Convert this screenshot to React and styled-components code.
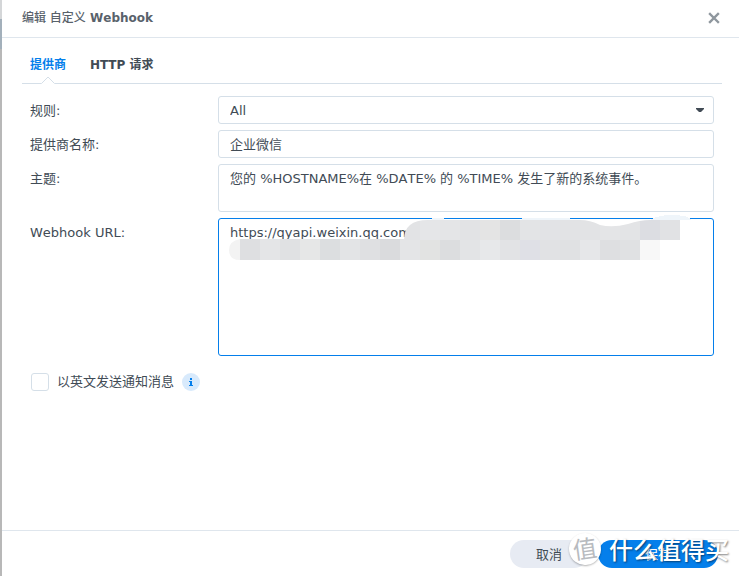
import React, { useState } from 'react';
import styled, { createGlobalStyle } from 'styled-components';

const GlobalStyle = createGlobalStyle`
  * {
    box-sizing: border-box;
  }

  body {
    margin: 0;
    background: #ffffff;
  }

  body, button, input, select, textarea {
    font-family: "DejaVu Sans", "Noto Sans CJK SC", sans-serif;
    font-size: 13px;
    font-kerning: none;
    color: #414b55;
  }
`;

const Desktop = styled.div`
  min-height: 100vh;
  display: flex;
  padding-left: 2px;
  background: linear-gradient(#d4d6d8 0 19px, #a3b0bb 19px 49px, #b8b8b8 49px);
`;

const Dialog = styled.section`
  flex: 1;
  min-width: 0;
  display: flex;
  flex-direction: column;
  background: #ffffff;
`;

const Header = styled.header`
  height: 38px;
  display: flex;
  align-items: center;
  justify-content: space-between;
  padding: 0 19px 2px 20px;
  border-bottom: 1px solid #dfe6ed;
`;

const Title = styled.h1`
  margin: 0;
  font-size: 12px;
  line-height: 16px;
  font-weight: bold;
  color: #59626b;
`;

const TitleName = styled.span`
  font-weight: 500;
`;

const CloseButton = styled.button`
  display: flex;
  padding: 0;
  border: 0;
  background: none;
`;

const Tabs = styled.nav`
  display: flex;
  gap: 24px;
  height: 46px;
  margin: 0 17px 0 20px;
  padding: 0 8px;
  border-bottom: 1px solid #d5dfe8;
`;

const Tab = styled.button`
  position: relative;
  padding: 6px 0 0;
  border: 0;
  background: none;
  font-size: 12px;
  font-weight: bold;
  color: ${(props) => (props.$active ? '#057feb' : '#414b55')};
`;

const TabArrow = styled.svg`
  position: absolute;
  left: 50%;
  bottom: -1px;
  margin-left: -7px;
`;

const Form = styled.form`
  flex: 1;
  display: flex;
  flex-direction: column;
  gap: 6px;
  padding: 12px 25px 12px 28px;
`;

const Row = styled.div`
  display: grid;
  grid-template-columns: 188px 1fr;
  align-items: start;
`;

const Label = styled.label`
  padding-top: 2px;
  line-height: 26px;
`;

const Field = styled.div`
  position: relative;
  display: flex;
`;

const control = `
  flex: 1;
  min-width: 0;
  margin: 0;
  padding: 0 11px;
  border: 1px solid #d5dfe8;
  border-radius: 3px;
  background: #ffffff;
  outline: none;
`;

const Select = styled.select`
  ${control}
  height: 28px;
  appearance: none;
`;

const Caret = styled.svg`
  position: absolute;
  right: 10px;
  top: 12px;
  pointer-events: none;
`;

const Input = styled.input`
  ${control}
  height: 28px;
  padding-bottom: 2px;
`;

const TextArea = styled.textarea`
  ${control}
  height: ${(props) => props.$height}px;
  padding-top: 4px;
  line-height: 20px;
  resize: none;
  border-color: ${(props) => (props.$active ? '#057feb' : '#d5dfe8')};
`;

const Mosaic = styled.svg`
  position: absolute;
  left: 0;
  top: -4px;
  pointer-events: none;
`;

const CheckRow = styled.div`
  display: flex;
  align-items: center;
  margin-top: 8px;
  padding-left: 1px;
`;

const CheckLabel = styled.label`
  display: flex;
  align-items: center;
  gap: 8px;
  line-height: 24px;
`;

const Checkbox = styled.input`
  appearance: none;
  width: 18px;
  height: 18px;
  margin: 0;
  border: 1px solid #d5dfe8;
  border-radius: 3px;

  &:checked {
    background: #057feb;
  }
`;

const InfoIcon = styled.svg`
  margin-left: 8px;
`;

const Footer = styled.footer`
  position: relative;
  height: 46px;
  display: flex;
  justify-content: flex-end;
  align-items: flex-start;
  gap: 10px;
  padding: 9px 21px 0;
  border-top: 1px solid #dfe6ed;
`;

const Button = styled.button`
  height: 28px;
  min-width: ${(props) => (props.$primary ? '120px' : '78px')};
  padding: 0 0 2px;
  border: 0;
  border-radius: 14px;
  background: ${(props) => (props.$primary ? '#057feb' : '#e7ebf3')};
  color: ${(props) => (props.$primary ? '#ffffff' : '#414b55')};
`;

const Watermark = styled.div`
  position: absolute;
  right: 10px;
  top: 0;
  display: flex;
  align-items: center;
  gap: 8px;
  height: 36px;
  font-family: "Noto Sans CJK SC", sans-serif;
  color: #ffffff;
  pointer-events: none;
`;

const Seal = styled.span`
  width: 32px;
  height: 32px;
  border-radius: 50%;
  background: #ffffff;
  box-shadow: 0 1px 2px rgba(0, 0, 0, 0.3);
  font-size: 24px;
  line-height: 30px;
  text-align: center;
  color: #b8bbbf;
  transform: rotate(-8deg);
`;

const Brand = styled.span`
  font-size: 24px;
  line-height: 36px;
  font-weight: 500;
  text-shadow: 1px 1px 2px rgba(0, 0, 0, 0.5);
`;

const topTiles = ['#e5e6e8', '#e2e3e5', '#e5e6e8', '#e4e5e7', '#e2e3e5', '#e4e4e4', '#dcdddf', '#e3e4e6', '#e2e3e6', '#e2e3e5', '#e2e3e5', '#e4e5e7', '#e3e4e6', '#dcdde2', '#e1e2e4', '#ecedef'];
const bottomTiles = ['#f3f3f3', '#dedfe1', '#e4e5e7', '#e0e1e3', '#e6e7e7', '#dcdee0', '#e3e4e6', '#dfe0e2', '#dadbdd', '#e4e5e7', '#e2e3e2', '#dcdddf', '#e3e4e6', '#e7e8ea', '#e2e3e5', '#dfe0e6', '#e1e2e4', '#e0e1e3', '#e6e7e9', '#dedfe1', '#e0e1e3', '#f8f8f8'];

function UrlMosaic() {
  return (
    <Mosaic width="480" height="48" viewBox="218 214 480 48" shapeRendering="crispEdges" aria-hidden="true">
      <defs>
        <clipPath id="brush">
          <path d="M404 240 Q404 220 428 220 H580 Q590 220 600 225 Q613 228 628 224 Q640 220 650 220 H680 V240 H660 V260 H240 Q229 260 229 250 Q229 241 240 239 H404Z" />
        </clipPath>
      </defs>
      <path d="M432 218h12v2h-12z M522 218h48v2h-48z M650 220q8-5 22-5 q16 0 20 5z" fill="#eff5fa" />
      <g clipPath="url(#brush)">
        {topTiles.map((fill, i) => (
          <rect key={i} x={380 + i * 20} y="218" width="20" height="22" fill={fill} />
        ))}
        {bottomTiles.map((fill, i) => (
          <rect key={i} x={220 + i * 20} y={i < 9 ? 238 : 240} width="20" height="22" fill={fill} />
        ))}
      </g>
    </Mosaic>
  );
}

function App() {
  const [rule, setRule] = useState('All');
  const [name, setName] = useState('企业微信');
  const [subject, setSubject] = useState('您的 %HOSTNAME%在 %DATE% 的 %TIME% 发生了新的系统事件。');
  const [url, setUrl] = useState('https://qyapi.weixin.qq.com');

  return (
    <Desktop>
      <GlobalStyle />
      <Dialog>
        <Header>
          <Title><TitleName>编辑 自定义</TitleName> Webhook</Title>
          <CloseButton type="button" aria-label="关闭">
            <svg width="12" height="12" viewBox="0 0 12 12">
              <path d="M2 2l8 8M10 2l-8 8" stroke="#8f979e" strokeWidth="2.4" strokeLinecap="square" />
            </svg>
          </CloseButton>
        </Header>
        <Tabs>
          <Tab type="button" $active>
            提供商
            <TabArrow width="14" height="8" viewBox="0 0 14 8">
              <path d="M0 8L7 1l7 7z" fill="#ffffff" />
              <path d="M0.5 7.5L7 1l6.5 6.5" fill="none" stroke="#d5dfe8" />
            </TabArrow>
          </Tab>
          <Tab type="button">HTTP 请求</Tab>
        </Tabs>
        <Form>
          <Row>
            <Label htmlFor="rule">规则:</Label>
            <Field>
              <Select id="rule" value={rule} onChange={(e) => setRule(e.target.value)}>
                <option>All</option>
              </Select>
              <Caret width="8" height="4" viewBox="0 0 8 4">
                <path d="M0 0h8v1L5 4H3L0 1z" fill="#414b55" />
              </Caret>
            </Field>
          </Row>
          <Row>
            <Label htmlFor="name">提供商名称:</Label>
            <Field>
              <Input id="name" value={name} onChange={(e) => setName(e.target.value)} />
            </Field>
          </Row>
          <Row>
            <Label htmlFor="subject">主题:</Label>
            <Field>
              <TextArea id="subject" $height={48} value={subject} onChange={(e) => setSubject(e.target.value)} />
            </Field>
          </Row>
          <Row>
            <Label htmlFor="url">Webhook URL:</Label>
            <Field>
              <TextArea id="url" $height={138} $active value={url} onChange={(e) => setUrl(e.target.value)} />
              <UrlMosaic />
            </Field>
          </Row>
          <CheckRow>
            <CheckLabel>
              <Checkbox type="checkbox" />
              以英文发送通知消息
            </CheckLabel>
            <InfoIcon width="18" height="18" viewBox="0 0 18 18">
              <circle cx="9" cy="9" r="9" fill="#d8eafc" />
              <path d="M8 5h2v2H8zM7 8h3v4h1v1H7v-1h1V9H7z" fill="#057feb" />
            </InfoIcon>
          </CheckRow>
        </Form>
        <Footer>
          <Button type="button">取消</Button>
          <Button type="button" $primary>保存</Button>
          <Watermark>
            <Seal>值</Seal>
            <Brand>什么值得买</Brand>
          </Watermark>
        </Footer>
      </Dialog>
    </Desktop>
  );
}

export default App;
